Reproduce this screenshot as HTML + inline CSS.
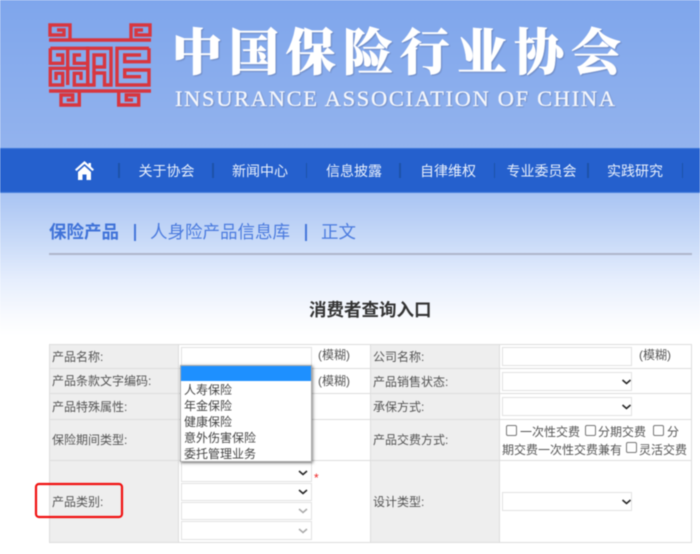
<!DOCTYPE html>
<html lang="zh"><head><meta charset="utf-8"><title>消费者查询入口</title>
<style>
html,body{margin:0;padding:0;width:700px;height:554px;overflow:hidden;background:#fff}
body{font-family:"Liberation Sans","Noto Sans CJK SC",sans-serif;position:relative}
#w{position:absolute;left:0;top:0;width:700px;height:554px;overflow:hidden;filter:blur(.45px);
background:linear-gradient(#7fa6ec 0,#93b3ee 148px,#a9c4f3 193px,#c8daf8 240px,#e6eefd 280px,#f8fafe 315px,#fff 335px)}
.a{position:absolute;white-space:nowrap}
.nav{position:absolute;left:0;top:148px;width:700px;height:45px;background:#2560cd;border-top:1px solid #3a74d8;border-bottom:1px solid #4a80dc;box-sizing:border-box}
.n{position:absolute;top:162px;color:#e9f0fc;font-size:14px;line-height:18px;white-space:nowrap}
.s{position:absolute;top:163px;width:1.5px;height:15px;background:#1d52a8}
.l{color:#555;font-size:12px;line-height:16px;white-space:nowrap;position:absolute}
.box{position:absolute;background:#fff;border:1px solid #e2e2e2;box-sizing:border-box}
.c{position:absolute;width:9px;height:9px;border:1px solid #777;border-radius:2px;background:#fff}
.o{height:16px;line-height:16px;font-size:12px;color:#444;padding-left:3px;white-space:nowrap;position:relative;top:1px}
</style></head><body><div id="w">

<svg class="a" style="left:0;top:0" width="700" height="148" viewBox="0 0 700 148">
<g fill="none" stroke="#d8363f" stroke-width="3.400" stroke-linejoin="miter">
<path d="M49 40H151"/>
<path d="M49 91H151"/>
<path d="M70 40V25H50V35H64V30H57"/>
<path d="M131 40V25H150V35H136V30H143"/>
<path d="M79.300 91V105H61V95H72.700V100H66.700"/>
<path d="M118.700 91V105H138.700V95H126.300V100H133"/>
<path d="M50.300 48.300H87.700V85H74.300V73.300H81V80"/>
<path d="M87.700 68.300H50.300V85H62.700V73.300H56V80"/>
<path d="M50.300 48.300V63.300H62.700V55H56"/>
<path d="M87.700 63.300H74.300V55H81"/>
<path d="M67.700 48.300V85"/>
<path d="M87.700 85V48.300H111V85H104.500V73H94V85H87.700"/>
<path d="M94 73V55H104.500V67H94"/>
<path d="M149 48.300H117V85H149V70H124.700V76.700H141"/>
<path d="M149 48.300V61.700H124.700V55H141"/>
</g>
<text x="172" y="70" font-size="50" font-weight="900" fill="#fff" stroke="#fff" stroke-width=".5" letter-spacing="7" style="font-family:'Noto Serif CJK SC',serif;filter:drop-shadow(1px 1px .5px rgba(90,110,160,.55))">中国保险行业协会</text>
<text x="175" y="106" font-size="22.500" fill="#f4f6fb" stroke="#f4f6fb" stroke-width=".25" textLength="440" lengthAdjust="spacing" style="font-family:'Liberation Serif',serif;filter:drop-shadow(1px 1px .5px rgba(90,110,160,.5))">INSURANCE ASSOCIATION OF CHINA</text>
</svg>

<div class="nav"></div>
<svg class="a" style="left:74px;top:160px" width="22" height="21" viewBox="0 0 22 21">
<path d="M10.500 1L1 9.500l1.500 1.500L10.500 4l8 7 1.500-1.500-3-2.700V3h-2.500v1.600z" fill="#fff"/>
<path d="M4 12L10.500 6l6.500 6v8h-4.500v-5.500h-4V20H4z" fill="#fff"/>
</svg>
<div class="s" style="left:118px"></div>
<div class="n" style="left:138.500px">关于协会</div>
<div class="s" style="left:212px"></div>
<div class="n" style="left:232px">新闻中心</div>
<div class="s" style="left:305.500px"></div>
<div class="n" style="left:326px">信息披露</div>
<div class="s" style="left:399px"></div>
<div class="n" style="left:420px">自律维权</div>
<div class="s" style="left:493.500px"></div>
<div class="n" style="left:506.500px">专业委员会</div>
<div class="s" style="left:587px"></div>
<div class="n" style="left:607px">实践研究</div>
<div class="s" style="left:681.500px"></div>

<div class="a" style="left:49px;top:221px;font-size:17.500px;line-height:22px;font-weight:700;color:#3f72d8">保险产品</div>
<div class="a" style="left:133.500px;top:224px;width:2px;height:17px;background:#4476da"></div>
<div class="a" style="left:150px;top:221px;font-size:17.500px;line-height:22px;color:#4a7ade">人身险产品信息库</div>
<div class="a" style="left:304.500px;top:224px;width:2px;height:17px;background:#4476da"></div>
<div class="a" style="left:321px;top:221px;font-size:17.500px;line-height:22px;color:#4a7ade">正文</div>
<div class="a" style="left:49px;top:253px;width:643px;height:1.500px;background:#aeb6ca"></div>

<div class="a" style="left:309px;top:299px;font-size:17.500px;line-height:22px;font-weight:700;color:#333">消费者查询入口</div>

<!-- table -->
<div class="a" style="left:49px;top:344px;width:643px;height:199px;background:#fff;border:1px solid #ddd;box-sizing:border-box"></div>
<div class="a" style="left:50px;top:345px;width:128px;height:197px;background:#eee"></div>
<div class="a" style="left:371px;top:345px;width:128px;height:197px;background:#eee"></div>
<div class="a" style="left:178px;top:344px;width:1px;height:199px;background:#ddd"></div>
<div class="a" style="left:370px;top:344px;width:1px;height:199px;background:#ddd"></div>
<div class="a" style="left:499px;top:344px;width:1px;height:199px;background:#ddd"></div>
<div class="a" style="left:49px;top:368px;width:643px;height:1px;background:#ddd"></div>
<div class="a" style="left:49px;top:393px;width:643px;height:1px;background:#ddd"></div>
<div class="a" style="left:49px;top:419px;width:643px;height:1px;background:#ddd"></div>
<div class="a" style="left:49px;top:460px;width:643px;height:1px;background:#ddd"></div>

<div class="l" style="left:52px;top:349px">产品名称:</div>
<div class="l" style="left:52px;top:373px">产品条款文字编码:</div>
<div class="l" style="left:52px;top:399px">产品特殊属性:</div>
<div class="l" style="left:52px;top:432px">保险期间类型:</div>
<div class="l" style="left:52px;top:494px">产品类别:</div>
<div class="l" style="left:373px;top:349px">公司名称:</div>
<div class="l" style="left:373px;top:374px">产品销售状态:</div>
<div class="l" style="left:373px;top:399px">承保方式:</div>
<div class="l" style="left:373px;top:432px">产品交费方式:</div>
<div class="l" style="left:373px;top:494px">设计类型:</div>

<div class="l" style="left:318px;top:347px">(模糊)</div>
<div class="l" style="left:318px;top:373px">(模糊)</div>
<div class="l" style="left:639px;top:347px">(模糊)</div>

<div class="box" style="left:181px;top:347px;width:131px;height:19px"></div>
<div class="box" style="left:502px;top:347px;width:130px;height:19px"></div>

<div class="box" style="left:502px;top:372px;width:130px;height:19px"></div>
<div class="box" style="left:502px;top:397px;width:130px;height:19px"></div>
<div class="box" style="left:502px;top:492px;width:130px;height:19px"></div>
<div class="box" style="left:181px;top:462px;width:131px;height:20px"></div>
<div class="box" style="left:181px;top:483px;width:131px;height:18px"></div>
<div class="box" style="left:181px;top:502px;width:131px;height:18px"></div>
<div class="box" style="left:181px;top:521px;width:131px;height:19px"></div>

<svg class="a" style="left:0;top:340px" width="700" height="214" viewBox="0 340 700 214" fill="none" stroke-width="1.500">
<g stroke="#222">
<path d="M622.500 380l4 3.500 4-3.500"/><path d="M622.500 405l4 3.500 4-3.500"/><path d="M622.500 500l4 3.500 4-3.500"/>
<path d="M299 471l4 3.500 4-3.500"/><path d="M299 490l4 3.500 4-3.500"/>
</g>
<g stroke="#aaa">
<path d="M299 509l4 3.500 4-3.500"/><path d="M299 529l4 3.500 4-3.500"/>
</g>
<rect x="36" y="484" width="86" height="33" rx="3" stroke="#f01010" stroke-width="2.200"/>
</svg>
<div class="a" style="left:314px;top:471px;font-size:12px;line-height:14px;color:#e22">*</div>

<div class="c" style="left:506px;top:425px"></div>
<div class="l" style="left:520px;top:424px">一次性交费</div>
<div class="c" style="left:585px;top:425px"></div>
<div class="l" style="left:598px;top:424px">分期交费</div>
<div class="c" style="left:653px;top:425px"></div>
<div class="l" style="left:667px;top:424px">分</div>
<div class="l" style="left:502px;top:442px">期交费一次性交费兼有</div>
<div class="c" style="left:626px;top:442px"></div>
<div class="l" style="left:639px;top:442px">灵活交费</div>

<div class="a" style="left:180px;top:365px;width:132px;height:97px;background:#fff;box-shadow:1px 1px 3px rgba(0,0,0,.5);border:1px solid #aaa;box-sizing:border-box">
<div style="height:15px;background:#1e90ff"></div>
<div class="o">人寿保险</div>
<div class="o">年金保险</div>
<div class="o">健康保险</div>
<div class="o">意外伤害保险</div>
<div class="o">委托管理业务</div>
</div>

</div></body></html>
